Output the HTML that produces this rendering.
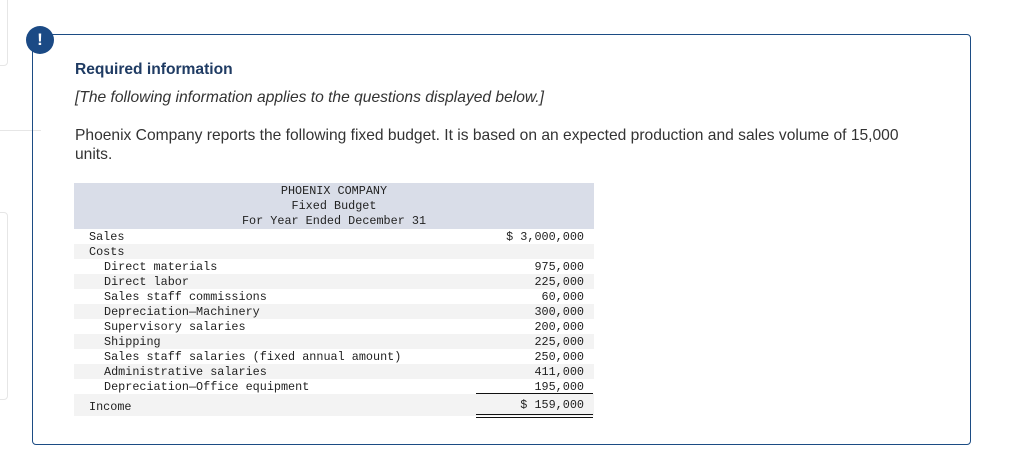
<!DOCTYPE html>
<html><head><style>
body{margin:0;width:1024px;height:457px;background:#fff;position:relative;overflow:hidden;font-family:"Liberation Sans",Arial,sans-serif;}
.side{position:absolute;left:-6px;border:1px solid #e6e6e6;border-radius:4px;width:12px;}
.box{position:absolute;left:32px;top:34px;width:937px;height:409px;border:1px solid #1c4c84;border-radius:4px;}
.ic{position:absolute;left:26px;top:26px;width:28px;height:28px;border-radius:50%;background:#1b4a85;color:#fff;font-weight:bold;font-size:17px;text-align:center;line-height:28px;}
.t{position:absolute;left:75px;color:#1f3a60;font-size:15.6px;}
.tb{position:absolute;left:74px;top:183px;width:520px;font-family:"Liberation Mono",monospace;font-size:11.8px;color:#222;}
.hd{background:#d9dde8;height:46px;text-align:center;line-height:15px;box-sizing:border-box;padding-top:1px;width:520px;}
.r{height:15px;line-height:16px;position:relative;}
.r.g{background:#f3f3f3}
.r span.a{position:absolute;right:10px;top:0}
.l1{padding-left:15px}.l2{padding-left:30px}
</style></head><body>
<div class="side" style="top:-4px;height:68px"></div>
<div class="side" style="top:212px;height:186px"></div>
<div class="side" style="top:130px;height:0;border-bottom:none;width:40px;left:-1px"></div>
<div class="box"></div>
<div class="ic">!</div>
<div class="t" style="top:61px;font-weight:bold;color:#1f3b63">Required information</div>
<div class="t" style="top:89px;font-style:italic;color:#333">[The following information applies to the questions displayed below.]</div>
<div class="t" style="top:126px;color:#333;line-height:19px;width:850px">Phoenix Company reports the following fixed budget. It is based on an expected production and sales volume of 15,000 units.</div>
<div class="tb">
<div class="hd"><div>PHOENIX COMPANY</div><div>Fixed Budget</div><div>For Year Ended December 31</div></div>
<div class="r l1">Sales<span class="a">$ 3,000,000</span></div>
<div class="r g l1">Costs</div>
<div class="r l2">Direct materials<span class="a">975,000</span></div>
<div class="r g l2">Direct labor<span class="a">225,000</span></div>
<div class="r l2">Sales staff commissions<span class="a">60,000</span></div>
<div class="r g l2">Depreciation—Machinery<span class="a">300,000</span></div>
<div class="r l2">Supervisory salaries<span class="a">200,000</span></div>
<div class="r g l2">Shipping<span class="a">225,000</span></div>
<div class="r l2">Sales staff salaries (fixed annual amount)<span class="a">250,000</span></div>
<div class="r g l2">Administrative salaries<span class="a">411,000</span></div>
<div class="r l2">Depreciation—Office equipment<span class="a">195,000</span></div>
<div class="r g l1" style="height:22px;line-height:27px;">Income<span class="a" style="top:-2px">$ 159,000</span></div>
</div>
<div style="position:absolute;left:476px;top:393px;width:117px;border-top:1px solid #111"></div>
<div style="position:absolute;left:476px;top:414px;width:117px;height:2px;border-top:1px solid #111;border-bottom:1px solid #111"></div>
</body></html>
